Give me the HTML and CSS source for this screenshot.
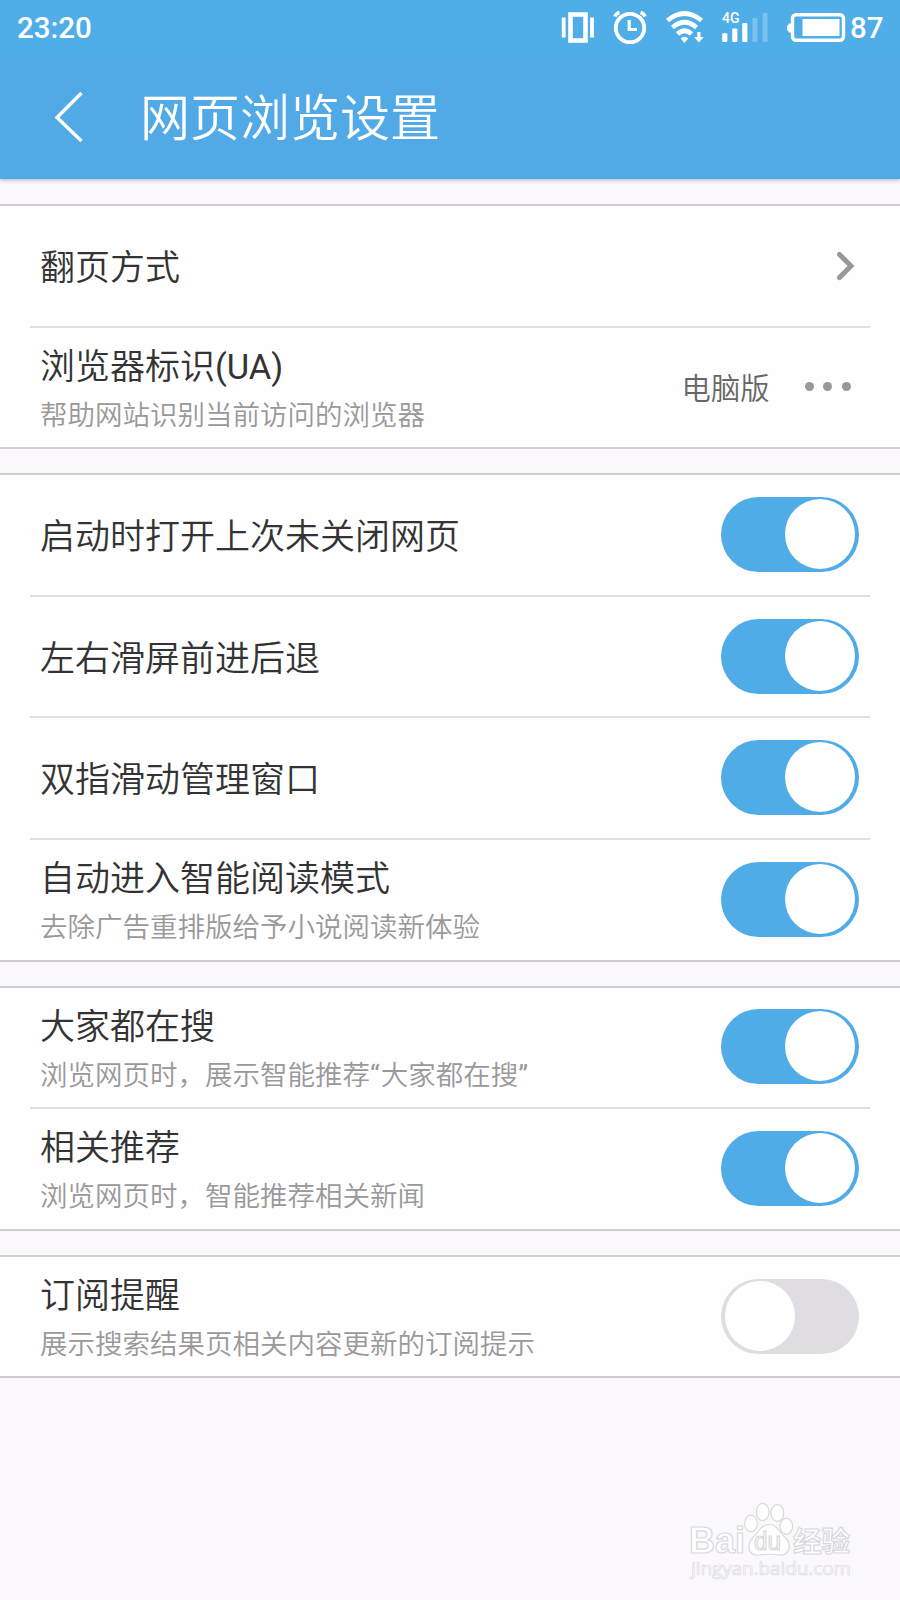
FILE: index.html
```html
<!DOCTYPE html>
<html lang="zh-CN">
<head>
<meta charset="utf-8">
<title>网页浏览设置</title>
<link rel="stylesheet" href="styles.css">
</head>
<body>
<div class="screen">
  <header class="header">
    <div class="status">
      <span class="clock">23:20</span>
      <svg class="status-icons" width="290" height="50" viewBox="0 0 290 50" fill="none" stroke="#fff">
        <!-- vibrate -->
        <rect x="10.500" y="14.500" width="15" height="26" stroke-width="4.600"/>
        <path d="M3.700 17.500v20M32 17.500v20" stroke-width="3.800"/>
        <!-- alarm -->
        <circle cx="70" cy="28" r="14.200" stroke-width="3.800"/>
        <path d="M69.200 20v9.500h7.800" stroke-width="3.200"/>
        <path d="M55 16.500q1-3 4.500-4M85 16.500q-1-3-4.500-4" stroke-width="3.600"/>
        <!-- wifi -->
        <path d="M107.500 20.500q17-14 34 0M112.500 27.500q12-10.500 24 0M117.500 34q7-6.500 14 0" stroke-width="4.600"/>
        <path d="M124.500 36.700q2.800 0 3.700 1.700L124.500 43l-3.700-4.600q.9-1.700 3.700-1.700z" fill="#fff" stroke="none"/>
        <path d="M137.300 32h3.200v5h3.200l-4.800 5.400-4.800-5.400h3.200z" fill="#fff" stroke="none"/>
        <!-- cellular -->
        <g fill="#fff" stroke="none">
          <rect x="162.200" y="33" width="5.200" height="9" rx="1.500"/>
          <rect x="172.200" y="28.500" width="5.200" height="13.500" rx="1"/>
          <rect x="182.200" y="23" width="5.200" height="19" rx="1"/>
          <rect x="192.400" y="18" width="5" height="24" rx="1" opacity=".26"/>
          <rect x="202.600" y="13" width="5" height="29" rx="1" opacity=".26"/>
          <text class="net" x="162" y="23">4G</text>
        </g>
        <!-- battery -->
        <rect x="232.500" y="14.700" width="51" height="25.600" rx="3.500" stroke-width="3.400"/>
        <path d="M231 23.500h-2.500v2h-1.500v5h1.500v2h2.500z" fill="#fff" stroke-width="0"/>
        <rect x="242.500" y="19" width="37" height="17" fill="#fff" stroke="none"/>
      </svg>
      <span class="level">87</span>
    </div>
    <div class="navbar">
      <svg class="back" width="32" height="54" viewBox="0 0 32 54"><path d="M28.500 3 4 27.500 28.500 51" fill="none" stroke="#fff" stroke-width="3.400"/></svg>
      <h1 class="heading">网页浏览设置</h1>
    </div>
  </header>

  <main class="groups">
    <section class="group">
      <div class="row">
        <div class="label"><div class="title">翻页方式</div></div>
        <svg class="chevron" width="19" height="30" viewBox="0 0 19 30"><path d="M3.500 3.500 15 15 3.500 26.500" fill="none" stroke="#98989b" stroke-width="5" stroke-linecap="round"/></svg>
      </div>
      <div class="row">
        <div class="label double"><div class="title">浏览器标识<span class="latin">(UA)</span></div><div class="sub">帮助网站识别当前访问的浏览器</div></div>
        <div class="value">电脑版</div>
        <div class="dots"><i></i><i></i><i></i></div>
      </div>
    </section>

    <section class="group">
      <div class="row"><div class="label"><div class="title">启动时打开上次未关闭网页</div></div><div class="switch on"><i class="knob"></i></div></div>
      <div class="row"><div class="label"><div class="title">左右滑屏前进后退</div></div><div class="switch on"><i class="knob"></i></div></div>
      <div class="row"><div class="label"><div class="title">双指滑动管理窗口</div></div><div class="switch on"><i class="knob"></i></div></div>
      <div class="row"><div class="label double"><div class="title">自动进入智能阅读模式</div><div class="sub">去除广告重排版给予小说阅读新体验</div></div><div class="switch on"><i class="knob"></i></div></div>
    </section>

    <section class="group">
      <div class="row"><div class="label double"><div class="title">大家都在搜</div><div class="sub">浏览网页时，展示智能推荐<span class="quote">“</span>大家都在搜<span class="quote">”</span></div></div><div class="switch on"><i class="knob"></i></div></div>
      <div class="row"><div class="label double"><div class="title">相关推荐</div><div class="sub">浏览网页时，智能推荐相关新闻</div></div><div class="switch on"><i class="knob"></i></div></div>
    </section>

    <section class="group">
      <div class="row"><div class="label double"><div class="title">订阅提醒</div><div class="sub">展示搜索结果页相关内容更新的订阅提示</div></div><div class="switch"><i class="knob"></i></div></div>
    </section>
  </main>

  <svg class="watermark" width="170" height="90" viewBox="0 0 170 90">
    <g class="mark">
      <text class="brand" x="1" y="53" textLength="56" lengthAdjust="spacingAndGlyphs">Bai</text>
      <ellipse cx="63" cy="23.500" rx="6.300" ry="8.300"/>
      <ellipse cx="74.700" cy="12" rx="6.300" ry="8.700"/>
      <ellipse cx="89.300" cy="13" rx="6.400" ry="8.300"/>
      <ellipse cx="98.300" cy="26.300" rx="6.300" ry="8"/>
      <path d="M81 24.500q6 0 10 6 3 4 6.500 7.500 5.500 5.500 3 12-3 6-10 5-9.500-1.500-19 0-8 1-10-5-2-6 3-12 4-3.500 6.500-7.500 4-6 10-6z"/>
      <text class="paw-text" x="66" y="49.500" textLength="27" lengthAdjust="spacingAndGlyphs">du</text>
      <text class="brand-cn" x="105" y="51.500" textLength="57" lengthAdjust="spacingAndGlyphs">经验</text>
    </g>
    <text class="site" x="3" y="74.500" textLength="160" lengthAdjust="spacingAndGlyphs">jingyan.baidu.com</text>
  </svg>
</div>
</body>
</html>
```
FILE: styles.css
```css
* { box-sizing: border-box; }

body {
  margin: 0;
  background: #faf8fb;
  font-family: Roboto, "Noto Sans CJK SC", sans-serif;
}

.screen {
  position: relative;
  height: 1600px;
  overflow: hidden;
}

.header {
  height: 179px;
  background: #51aae5;
  box-shadow: 0 1px 4px rgba(60, 90, 130, .45);
  color: #fff;
}

.status {
  display: flex;
  height: 56px;
  padding-left: 17px;
  background: #4fade8;
  font-size: 29.5px;
  font-weight: 500;
  line-height: 56px;
}

.clock { width: 543px; }
.status-icons { flex: none; }
.net { font: 500 14px Roboto, sans-serif; }

.navbar {
  display: flex;
  align-items: center;
  height: 121px;
  padding-left: 53px;
}

.back { flex: none; margin-right: 55px; }

.heading {
  margin: 0;
  padding-top: 5px;
  font-size: 50px;
  font-weight: 350;
  line-height: 60px;
}

.groups {
  display: flex;
  flex-direction: column;
  gap: 24px;
  padding-top: 25px;
}

.group {
  border-top: 2px solid #cfcdd1;
  border-bottom: 2px solid #cfcdd1;
  background: #fefefe;
}

.row {
  display: flex;
  align-items: center;
  height: 121.6px;
  margin: 0 30px;
  padding: 0 11.500px 0 10px;
  border-bottom: 2px solid #dfdfe1;
}

.row:last-child {
  height: 119.6px;
  border-bottom: 0;
}

.label { flex: 1; padding-top: 5px; }
.double { padding-top: 8px; }

.title {
  color: #333;
  font-size: 35px;
  font-weight: 350;
  line-height: 49px;
}

.latin { font-weight: 400; font-size: 34.5px; }

.sub {
  color: #999;
  font-size: 27.5px;
  font-weight: 350;
  line-height: 48px;
  white-space: nowrap;
}

.quote { font-weight: 400; letter-spacing: 1px; }

.value {
  margin-right: 35px;
  margin-top: -2px;
  color: #666;
  font-size: 29.3px;
  font-weight: 350;
}

.dots { display: flex; gap: 9.5px; margin: -1px 8px 0 0; }
.dots i { width: 9px; height: 9px; border-radius: 50%; background: #98989b; }

.chevron { margin-right: 3.5px; }

.switch {
  width: 137.5px;
  height: 75px;
  padding: 2px 4px;
  margin-top: -1px;
  border-radius: 38px;
  background: #dfdde1;
}

.knob {
  display: block;
  width: 70px;
  height: 70px;
  border-radius: 50%;
  background: #fff;
}

.switch.on { background: #50ace7; }
.on .knob { margin-left: 59.5px; }

.watermark { position: absolute; left: 688px; top: 1500px; }
.mark { fill: #fff; stroke: #d9d8dc; stroke-width: 1.200; }
.brand { font: 700 36px "Liberation Sans", sans-serif; }
.paw-text { font: 400 25px "Liberation Sans", sans-serif; }
.brand-cn { font: 700 28px "Noto Sans CJK SC", sans-serif; }
.site { font: 400 18px "Open Sans", sans-serif; fill: #fff; stroke: #dddce1; stroke-width: .7; }
```
